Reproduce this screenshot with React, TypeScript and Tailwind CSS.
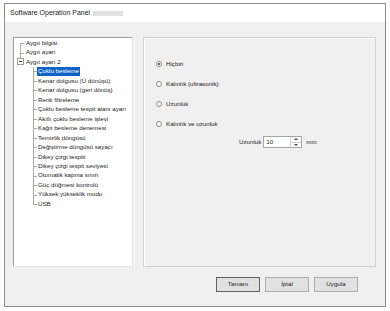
import React from "react";

const font = { fontFamily: '"Liberation Sans", Arial, sans-serif' };

const rootItems = ["Aygıt bilgisi", "Aygıt ayarı", "Aygıt ayarı 2"];
const childItems = [
  "Çoklu besleme",
  "Kenar dolgusu (Ü dönüşü)",
  "Kenar dolgusu (geri dönüş)",
  "Renk filtreleme",
  "Çoklu besleme tespit alanı ayarı",
  "Akıllı çoklu besleme işlevi",
  "Kağıt besleme denemesi",
  "Temizlik döngüsü",
  "Değiştirme döngüsü sayacı",
  "Dikey çizgi tespiti",
  "Dikey çizgi tespit seviyesi",
  "Otomatik kapma sınırı",
  "Güç düğmesi kontrolü",
  "Yüksek yükseklik modu",
  "USB",
];

function RootRow({ label, index }: { label: string; index: number }) {
  const first = index === 0;
  const last = index === rootItems.length - 1;
  return (
    <div className="flex h-[9.47px] items-center">
      <div className="relative h-full w-[11px] shrink-0">
        <span
          className={
            "absolute left-[6px] w-px bg-[#a9a9a9] " +
            (first ? "top-1/2 bottom-0" : last ? "top-0 h-1/2" : "top-0 bottom-0")
          }
        />
        <span className="absolute left-[6px] top-1/2 h-px w-[4px] bg-[#a9a9a9]" />
        {last && (
          <span className="absolute left-[2.5px] top-[1.2px] flex h-[7px] w-[7px] items-center justify-center border border-[#9a9a9a] bg-white">
            <span className="h-px w-[3px] bg-[#333]" />
          </span>
        )}
      </div>
      <span className="pl-[1px] leading-none">{label}</span>
    </div>
  );
}

function ChildRow({ label, index }: { label: string; index: number }) {
  const last = index === childItems.length - 1;
  const selected = index === 0;
  return (
    <div className="flex h-[9.47px] items-center">
      <div className="relative h-full w-[23px] shrink-0">
        <span
          className={"absolute left-[19px] w-px bg-[#a9a9a9] " + (last ? "top-0 h-1/2" : "top-0 bottom-0")}
        />
        <span className="absolute left-[19px] top-1/2 h-px w-[4px] bg-[#a9a9a9]" />
      </div>
      <span
        className={
          "flex h-[8.5px] items-center px-[1px] leading-none " +
          (selected ? "bg-[#0c62c6] text-white" : "")
        }
      >
        {label}
      </span>
    </div>
  );
}

function Radio({ label, checked }: { label: string; checked?: boolean }) {
  return (
    <div className="flex h-[8px] items-center">
      <span className="flex h-[6px] w-[6px] items-center justify-center rounded-full border border-[#8a8a8a] bg-white">
        {checked && <span className="h-[2.5px] w-[2.5px] rounded-full bg-[#333]" />}
      </span>
      <span className="ml-[4px] leading-none">{label}</span>
    </div>
  );
}

function Button({ label, isDefault }: { label: string; isDefault?: boolean }) {
  return (
    <div
      className={
        "flex h-[15px] w-[44px] items-center justify-center border bg-[#e1e1e1] leading-none " +
        (isDefault ? "border-[#5f5f5f]" : "border-[#adadad]")
      }
    >
      {label}
    </div>
  );
}

export default function App() {
  return (
    <div className="h-[311px] w-[390px] overflow-hidden bg-white pl-[4px] pt-[3px] text-[#1b1b1b]" style={font}>
      <div className="flex h-[304px] w-[382px] flex-col border border-[#8c8c8c]">
        <div className="flex h-[18px] shrink-0 items-center bg-white pl-[5px] text-[7px]">
          <span>Software Operation Panel</span>
          <span className="ml-[3px] h-[5px] w-[30px] bg-[#e0e0e0]" />
        </div>
        <div className="flex flex-1 flex-col bg-[#f0f0f0] pl-[8px] pr-[9px] pt-[15px] text-[6.2px]">
          <div className="flex h-[230px] gap-[10px]">
            <div className="w-[120px] border border-b-[#e4e4e4] border-l-[#9d9d9d] border-r-[#e4e4e4] border-t-[#9d9d9d] bg-white pt-[0.3px]">
              {rootItems.map((r, i) => (
                <RootRow key={r} label={r} index={i} />
              ))}
              {childItems.map((c, i) => (
                <ChildRow key={c} label={c} index={i} />
              ))}
            </div>
            <div className="flex w-[233px] flex-col border border-[#d0d0d0] pl-[12px] pt-[22px] shadow-[inset_1px_1px_0_#ffffff]">
              <div className="flex flex-col gap-[12px]">
                <Radio label="Hiçbiri" checked />
                <Radio label="Kalınlık (ultrasonik)" />
                <Radio label="Uzunluk" />
                <Radio label="Kalınlık ve uzunluk" />
              </div>
              <div className="mt-[8px] flex items-center pl-[83px]">
                <span className="leading-none">Uzunluk</span>
                <div className="ml-[2px] flex h-[12px] w-[39px] border border-[#a5a5a5] bg-white">
                  <span className="flex-1 pl-[2px] pt-[1.5px] leading-none">10</span>
                  <div className="flex w-[11px] flex-col border-l border-[#d0d0d0]">
                    <div className="flex flex-1 items-center justify-center">
                      <span className="h-0 w-0 border-x-[2px] border-b-[2px] border-x-transparent border-b-[#444]" />
                    </div>
                    <div className="flex flex-1 items-center justify-center border-t border-[#d0d0d0]">
                      <span className="h-0 w-0 border-x-[2px] border-t-[2px] border-x-transparent border-t-[#444]" />
                    </div>
                  </div>
                </div>
                <span className="ml-[4px] leading-none">mm</span>
              </div>
            </div>
          </div>
          <div className="mt-[10px] flex justify-end gap-[5px] pr-[18px]">
            <Button label="Tamam" isDefault />
            <Button label="İptal" />
            <Button label="Uygula" />
          </div>
        </div>
      </div>
    </div>
  );
}
